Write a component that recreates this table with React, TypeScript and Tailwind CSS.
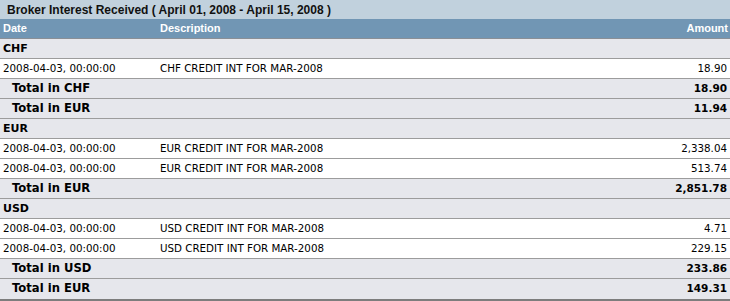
import React from "react";

type Row =
  | { kind: "group"; label: string }
  | { kind: "data"; date: string; desc: string; amount: string }
  | { kind: "total"; label: string; amount: string };

const rows: Row[] = [
  { kind: "group", label: "CHF" },
  { kind: "data", date: "2008-04-03, 00:00:00", desc: "CHF CREDIT INT FOR MAR-2008", amount: "18.90" },
  { kind: "total", label: "Total in CHF", amount: "18.90" },
  { kind: "total", label: "Total in EUR", amount: "11.94" },
  { kind: "group", label: "EUR" },
  { kind: "data", date: "2008-04-03, 00:00:00", desc: "EUR CREDIT INT FOR MAR-2008", amount: "2,338.04" },
  { kind: "data", date: "2008-04-03, 00:00:00", desc: "EUR CREDIT INT FOR MAR-2008", amount: "513.74" },
  { kind: "total", label: "Total in EUR", amount: "2,851.78" },
  { kind: "group", label: "USD" },
  { kind: "data", date: "2008-04-03, 00:00:00", desc: "USD CREDIT INT FOR MAR-2008", amount: "4.71" },
  { kind: "data", date: "2008-04-03, 00:00:00", desc: "USD CREDIT INT FOR MAR-2008", amount: "229.15" },
  { kind: "total", label: "Total in USD", amount: "233.86" },
  { kind: "total", label: "Total in EUR", amount: "149.31" },
];

const verdana = "font-['Verdana','DejaVu_Sans',sans-serif]";

export default function App() {
  return (
    <div className="w-[730px] h-[301px] bg-white overflow-hidden">
      <div className="h-[19px] bg-[#c1d1dd] pl-[7px] flex items-center text-[12px] font-bold text-[#111] font-['Liberation_Sans',Arial,sans-serif] leading-none">
        Broker Interest Received ( April 01, 2008 - April 15, 2008 )
      </div>
      <div className="h-[20px] bg-[#7196b4] border-b border-[#8a8f96] flex items-center text-[11px] font-bold text-white font-['Liberation_Sans',Arial,sans-serif] leading-none">
        <div className="w-[160px] pl-[3px]">Date</div>
        <div className="flex-1">Description</div>
        <div className="pr-[2px]">Amount</div>
      </div>
      <div className={`${verdana} text-[10.3px] text-black leading-none`}>
        {rows.map((r, i) => {
          const last = i === rows.length - 1;
          const border = last ? "border-b-2 border-[#7d7d7d]" : "border-b border-[#9c9c9c]";
          if (r.kind === "group") {
            return (
              <div key={i} className={`h-[20px] bg-[#e6e7ec] ${border} flex items-center pl-[3px] font-bold text-[11px]`}>
                {r.label}
              </div>
            );
          }
          if (r.kind === "total") {
            return (
              <div key={i} className={`${last ? "h-[22px] pb-[1px]" : "h-[20px]"} bg-[#e6e7ec] ${border} flex items-center font-bold`}>
                <div className="flex-1 pl-[12px] text-[11.6px]">{r.label}</div>
                <div className="pr-[3px] text-[10.5px]">{r.amount}</div>
              </div>
            );
          }
          return (
            <div key={i} className={`h-[20px] bg-white ${border} flex items-center`}>
              <div className="w-[160px] pl-[3px]">{r.date}</div>
              <div className="flex-1">{r.desc}</div>
              <div className="pr-[3px]">{r.amount}</div>
            </div>
          );
        })}
      </div>
    </div>
  );
}
